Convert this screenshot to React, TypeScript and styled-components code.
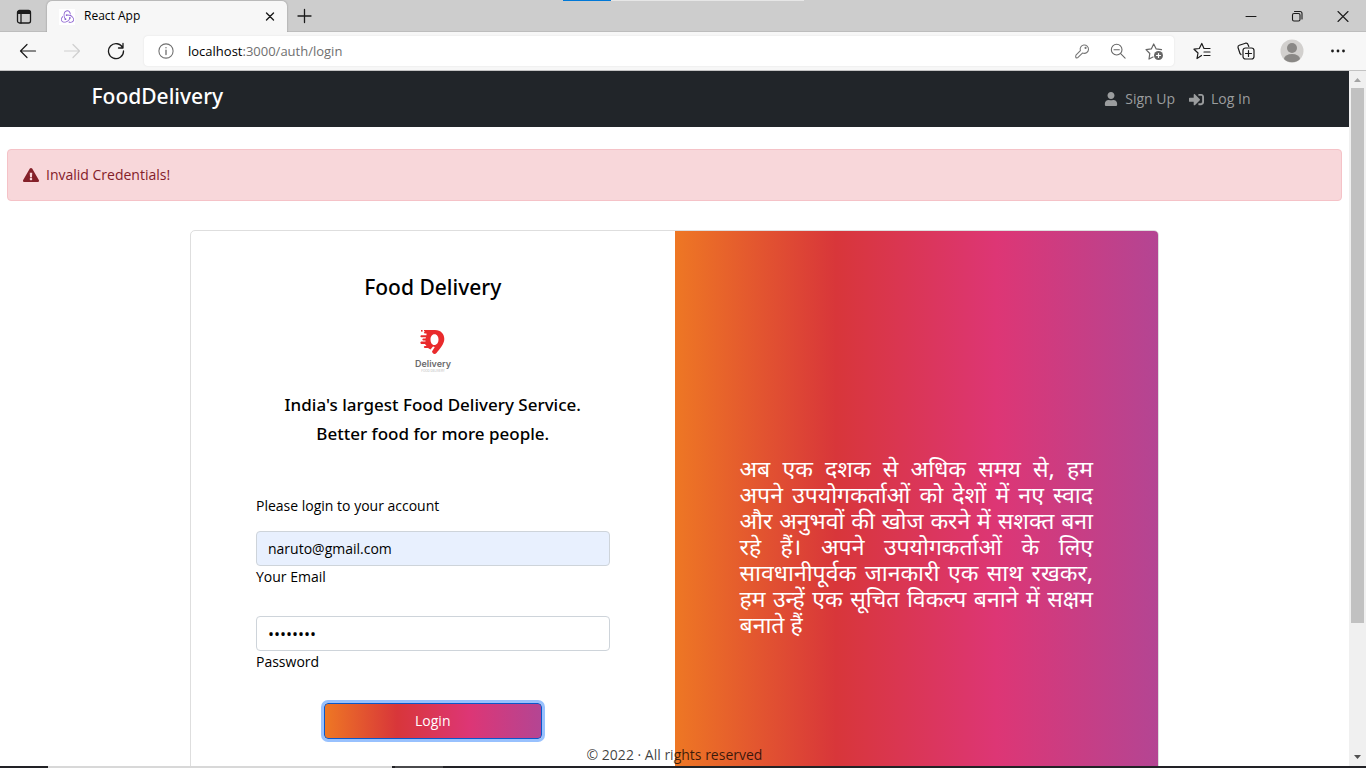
import React from "react";
import styled, { createGlobalStyle } from "styled-components";
import { FaUser, FaSignInAlt, FaExclamationTriangle } from "react-icons/fa";
import { SiRedux } from "react-icons/si";

const GRADIENT = "linear-gradient(to right, #ee7724, #d8363a, #dd3675, #b44593)";
const UI_FONT = `"Segoe UI", "Open Sans", "Noto Sans", sans-serif`;
const HEADING_FONT = `"Segoe UI", "Noto Sans", "Open Sans", sans-serif`;

const GlobalStyle = createGlobalStyle`
  *, *::before, *::after { box-sizing: border-box; }
  body { margin: 0; font-family: ${UI_FONT}; font-size: 14px; line-height: 20px; color: #000; background: #fff; }
  h1, h2, p { margin: 0; font-weight: 400; }
  button, input { font: inherit; color: inherit; }
  svg { display: block; flex: none; }
`;

const Screen = styled.div`
  display: flex;
  flex-direction: column;
  height: 100vh;
  overflow: hidden;
`;

/* Browser window */

const TopEdge = styled.div`
  display: flex;
  justify-content: center;
  height: 1px;
  background: #cdcdcd;
`;

const TopEdgePart = styled.span<{ $width: number; $color: string }>`
  width: ${(p) => p.$width}px;
  background: ${(p) => p.$color};
`;

const TabStrip = styled.div`
  display: flex;
  align-items: stretch;
  height: 31px;
  background: #cdcdcd;
  box-shadow: inset 0 -1px 0 #bdbdbd;
`;

const IconButton = styled.button<{ $width?: number }>`
  display: flex;
  align-items: center;
  justify-content: center;
  width: ${(p) => p.$width ?? 44}px;
  padding: 0;
  border: 0;
  background: transparent;
`;

const Tab = styled.div`
  display: flex;
  align-items: center;
  width: 240px;
  padding: 0 4px 0 12px;
  border-radius: 5px 5px 0 0;
  background: #f7f7f7;
  box-shadow: 0 0 2px rgba(0, 0, 0, 0.35);
  clip-path: inset(-2px -3px 0 -3px);
  font-size: 12px;
`;

const Favicon = styled.span`
  display: flex;
  align-items: center;
  justify-content: center;
  width: 16px;
  height: 16px;
  margin-right: 9px;
  background: #fff;
`;

const TabTitle = styled.span`
  flex: 1;
  padding-bottom: 2px;
`;

const WindowControls = styled.div`
  display: flex;
  margin-left: auto;
`;

const Toolbar = styled.div`
  display: flex;
  align-items: center;
  height: 39px;
  padding: 0 6px;
  background: #f7f7f7;
  border-bottom: 1px solid #c3c3c3;
`;

const AddressBar = styled.div`
  display: flex;
  flex: 1;
  align-items: center;
  height: 30px;
  margin: 0 6px;
  padding: 0 2px 0 14px;
  border-radius: 4px;
  background: #fff;
  box-shadow: 0 0 2px rgba(0, 0, 0, 0.1);
`;

const Url = styled.span`
  flex: 1;
  margin-left: 14px;
  color: #6f6f6f;
  font-size: 13px;
  b { font-weight: 400; color: #000; }
`;

const Viewport = styled.div`
  display: flex;
  flex: 1;
  min-height: 0;
`;

const Page = styled.div`
  position: relative;
  flex: 1;
  overflow: hidden;
`;

const ScrollBar = styled.div`
  display: flex;
  flex-direction: column;
  align-items: center;
  width: 17px;
  background: #f0f0f0;
`;

const ScrollTrack = styled.div`
  flex: 1;
  width: 13px;
`;

const ScrollThumb = styled.div`
  height: 81%;
  background: #c1c1c1;
`;

const TaskbarEdge = styled.div`
  display: flex;
  height: 2px;
  background: #222226;
`;

const TaskbarPart = styled.span<{ $width: number; $color: string }>`
  width: ${(p) => p.$width}px;
  background: ${(p) => p.$color};
`;

/* Site */

const Navbar = styled.header`
  height: 56px;
  background: #212529;
`;

const NavInner = styled.div`
  display: flex;
  align-items: center;
  justify-content: space-between;
  height: 100%;
  max-width: 1188px;
  margin: 0 auto;
  padding: 0 18px 0 11px;
`;

const Brand = styled.a`
  padding-bottom: 6px;
  color: #fff;
  font-family: ${HEADING_FONT};
  font-size: 21px;
  font-weight: 500;
  text-decoration: none;
`;

const NavLinks = styled.nav`
  display: flex;
  gap: 14px;
`;

const NavLink = styled.a`
  display: flex;
  align-items: center;
  gap: 7px;
  color: #9b9d9e;
  text-decoration: none;
`;

const Alert = styled.div`
  display: flex;
  align-items: center;
  gap: 7px;
  height: 52px;
  margin: 22px 7px 0;
  padding: 0 15px;
  border: 1px solid #f5c2c7;
  border-radius: 4px;
  background: #f8d7da;
  color: #842029;
`;

const Card = styled.main`
  display: grid;
  grid-template-columns: 1fr 1fr;
  width: 969px;
  max-width: 94%;
  min-height: 620px;
  margin: 29px auto 0;
  border: 1px solid #dedede;
  border-radius: 5px;
  overflow: hidden;
`;

const FormPane = styled.section`
  padding: 43px 65px;
`;

const Intro = styled.div`
  display: flex;
  flex-direction: column;
  align-items: center;
  text-align: center;
`;

const Title = styled.h1`
  font-family: ${HEADING_FONT};
  font-size: 21px;
  font-weight: 500;
  line-height: 27px;
`;

const LogoBox = styled.div`
  margin: 20px 0 9px;
`;

const Tagline = styled.h2`
  font-family: ${HEADING_FONT};
  font-size: 17px;
  font-weight: 500;
  line-height: 29px;
`;

const LoginForm = styled.form`
  display: flex;
  flex-direction: column;
  margin-top: 48px;
`;

const Hint = styled.p`
  margin-bottom: 15px;
`;

const Field = styled.div`
  display: flex;
  flex-direction: column-reverse;
  margin-bottom: 28px;
`;

const FieldInput = styled.input<{ $filled?: boolean }>`
  width: 100%;
  height: 35px;
  padding: 0 11px;
  border: 1px solid #ced4da;
  border-radius: 4px;
  background: ${(p) => (p.$filled ? "#e8f0fe" : "#fff")};
  outline: none;

  &[type="password"] {
    font-size: 16px;
  }
`;

const FieldLabel = styled.label`
  line-height: 22px;
`;

const LoginButton = styled.button`
  align-self: center;
  width: 218px;
  height: 36px;
  margin-top: 2px;
  border: 1px solid #0a58ca;
  border-radius: 4px;
  background: ${GRADIENT};
  box-shadow: 0 0 0 3px #98c1fe;
  color: #fff;
`;

const StoryPane = styled.section`
  display: flex;
  align-items: center;
  padding: 18px 65px 0;
  background: ${GRADIENT};
`;

const Story = styled.p`
  color: #fff;
  font-family: "Nirmala UI", "Noto Sans Devanagari", "Noto Sans", sans-serif;
  font-size: 23px;
  line-height: 26px;
  text-align: justify;
`;

const Footer = styled.footer`
  position: absolute;
  right: 0;
  bottom: 1px;
  left: 0;
  color: rgba(0, 0, 0, 0.75);
  text-align: center;
`;

type GlyphProps = {
  size?: number;
  color?: string;
  width?: number;
  children: React.ReactNode;
};

function Glyph({ size = 18, color = "#1b1b1b", width = 1.2, children }: GlyphProps) {
  return (
    <svg
      width={size}
      height={size}
      viewBox="0 0 18 18"
      fill="none"
      stroke={color}
      strokeWidth={width}
      strokeLinecap="round"
      strokeLinejoin="round"
      aria-hidden="true"
    >
      {children}
    </svg>
  );
}

function DeliveryLogo() {
  return (
    <svg width="60" height="60" viewBox="2 1 60 60" role="img" aria-label="Delivery">
      <path
        fill="#e92a2c"
        fillRule="evenodd"
        d="M23 10 H34 C40 10 43.300 14 43.300 19 C43.300 24 38.500 29.500 35.500 33 Q33.500 35 31.500 32.700 L31 31.500 L33.800 27 L32 26.500 L29.500 29.500 L27 28 H23.500 Q22 27 23.500 26 H25.500 L24 24 H20 Q18.500 22.700 20 21.600 H24.500 V20.500 H22 Q20.500 19.500 22 18.500 H24.500 L25 17.200 H20 Q18.500 16.200 20 15.200 H25.500 V13.500 H24 Q22 13 23.500 12 H24 V11.600 H23 Z M33.500 14.300 C30.800 14.300 29.500 17 29.500 19.500 C29.500 22.500 31 25 33.200 25 C36 25 37.500 22.500 37.500 19.500 C37.500 17 36.200 14.300 33.500 14.300 Z"
      />
      <rect x="20" y="10" width="1.600" height="1.600" fill="#e92a2c" />
      <text x="32" y="46.500" textAnchor="middle" fontFamily="Inter, sans-serif" fontSize="9" fontWeight="600" fill="#6a6a6c">
        Delivery
      </text>
      <text x="32" y="51.500" textAnchor="middle" fontFamily="Inter, sans-serif" fontSize="3" fill="#b8b8b8">
        FOOD DELIVERY
      </text>
    </svg>
  );
}

function BrowserChrome() {
  return (
    <>
      <TopEdge>
        <TopEdgePart $width={48} $color="#0078d7" />
        <TopEdgePart $width={193} $color="#e6e6e6" />
      </TopEdge>
      <TabStrip>
        <IconButton $width={47} aria-label="Tab actions">
          <Glyph width={1.3}>
            <rect x="2.500" y="2.500" width="13" height="12.500" rx="2" />
            <path d="M2.500 4.500H15.500" strokeWidth="3" strokeLinecap="butt" />
            <path d="M6 5V15" />
          </Glyph>
        </IconButton>
        <Tab>
          <Favicon>
            <SiRedux size={13} color="#8a5fd0" />
          </Favicon>
          <TabTitle>React App</TabTitle>
          <IconButton $width={26} aria-label="Close tab">
            <Glyph width={1.4}>
              <path d="M5.500 5L12.500 12M12.500 5L5.500 12" />
            </Glyph>
          </IconButton>
        </Tab>
        <IconButton $width={34} aria-label="New tab">
          <Glyph width={1.3}>
            <path d="M9.500 1.500V14.500M3 8H16" />
          </Glyph>
        </IconButton>
        <WindowControls>
          <IconButton $width={46} aria-label="Minimize">
            <Glyph width={1}>
              <path d="M4 8.500H14" />
            </Glyph>
          </IconButton>
          <IconButton $width={46} aria-label="Restore">
            <Glyph width={1.1}>
              <rect x="4.500" y="5.500" width="7.500" height="7.500" rx="1.500" />
              <path d="M6.500 3.500H12Q14 3.500 14 5.500V11" />
            </Glyph>
          </IconButton>
          <IconButton $width={46} aria-label="Close">
            <Glyph width={1.1}>
              <path d="M4 3.500L14 13.500M14 3.500L4 13.500" />
            </Glyph>
          </IconButton>
        </WindowControls>
      </TabStrip>
      <Toolbar>
        <IconButton aria-label="Back">
          <Glyph>
            <path d="M16.500 9H2M8 2.500L1.500 9L8 15.500" />
          </Glyph>
        </IconButton>
        <IconButton aria-label="Forward">
          <Glyph color="#cfcfcf">
            <path d="M1.500 9H16M10 2.500L16.500 9L10 15.500" />
          </Glyph>
        </IconButton>
        <IconButton aria-label="Refresh">
          <Glyph width={1.3}>
            <path d="M15.800 6A7.500 7.500 0 1 0 16.500 9M16 1.500V6H11.500" />
          </Glyph>
        </IconButton>
        <AddressBar>
          <Glyph size={16} color="#707070">
            <circle cx="9" cy="9" r="8" />
            <path d="M9 8V13M9 5.200V5.400" strokeWidth="1.500" />
          </Glyph>
          <Url>
            <b>localhost</b>:3000/auth/login
          </Url>
          <IconButton $width={36} aria-label="Saved passwords">
            <Glyph size={16} color="#767676">
              <path d="M7.200 8.500A4.700 4.700 0 1 1 10.500 11.500L9.500 11.300L4.500 16.300Q3.500 17 2.200 16.500Q1.500 15 2.200 13.700Z" />
              <circle cx="13" cy="5.500" r="0.600" />
            </Glyph>
          </IconButton>
          <IconButton $width={36} aria-label="Zoom">
            <Glyph size={16} color="#666">
              <circle cx="7.500" cy="7.500" r="6" />
              <path d="M12 12L17 17M4.500 7.500H10.500" />
            </Glyph>
          </IconButton>
          <IconButton $width={36} aria-label="Add to favorites">
            <Glyph color="#666">
              <path d="M8 15L4 17L4.800 11.500L1 7.700L6.300 6.900L8.700 2L11.200 6.900L16.500 7.700" />
              <circle cx="13.500" cy="13.500" r="4.500" fill="#666" stroke="none" />
              <path d="M13.500 11.500V15.500M11.500 13.500H15.500" stroke="#fff" />
            </Glyph>
          </IconButton>
        </AddressBar>
        <IconButton aria-label="Favorites">
          <Glyph>
            <path d="M8.500 13.500L4 16.500L5 11L1 7.200L6.300 6.500L8.800 1.500L11 6.500H17M11 10H17M11 13.500H17" />
          </Glyph>
        </IconButton>
        <IconButton aria-label="Collections">
          <Glyph width={1.2}>
            <path d="M4 12.500L3 11.500L1 5.500Q0.800 3.800 2.300 3.300L8.500 1.200Q10.500 0.800 11 2.500L11.800 4.500" />
            <rect x="6" y="6" width="11" height="11" rx="2.500" />
            <path d="M11.500 8.500V14.500M8.500 11.500H14.500" />
          </Glyph>
        </IconButton>
        <IconButton $width={48} aria-label="Profile">
          <svg width="24" height="24" viewBox="0 0 24 24" aria-hidden="true">
            <circle cx="12" cy="12" r="11.500" fill="#d2d0ce" />
            <circle cx="12" cy="9" r="5" fill="#8a8886" />
            <path d="M4 20A8 5 0 0 1 20 20A11.500 11.500 0 0 1 4 20Z" fill="#8a8886" />
          </svg>
        </IconButton>
        <IconButton aria-label="Settings and more">
          <Glyph>
            <g fill="#1b1b1b" stroke="none">
              <circle cx="3.500" cy="9" r="1.400" />
              <circle cx="9" cy="9" r="1.400" />
              <circle cx="14.500" cy="9" r="1.400" />
            </g>
          </Glyph>
        </IconButton>
      </Toolbar>
    </>
  );
}

function ScrollArrow({ down }: { down?: boolean }) {
  return (
    <svg width="17" height="17" viewBox="0 0 17 17" aria-hidden="true">
      <path d={down ? "M5 6H12L8.500 10Z" : "M5 11H12L8.500 7Z"} fill={down ? "#505050" : "#a3a3a3"} />
    </svg>
  );
}

export default function App() {
  return (
    <Screen>
      <GlobalStyle />
      <BrowserChrome />
      <Viewport>
        <Page>
          <Navbar>
            <NavInner>
              <Brand href="#">FoodDelivery</Brand>
              <NavLinks>
                <NavLink href="#signup">
                  <FaUser size={14} />
                  Sign Up
                </NavLink>
                <NavLink href="#login">
                  <FaSignInAlt size={15} />
                  Log In
                </NavLink>
              </NavLinks>
            </NavInner>
          </Navbar>
          <Alert role="alert">
            <FaExclamationTriangle size={16} />
            Invalid Credentials!
          </Alert>
          <Card>
            <FormPane>
              <Intro>
                <Title>Food Delivery</Title>
                <LogoBox>
                  <DeliveryLogo />
                </LogoBox>
                <Tagline>
                  India's largest Food Delivery Service.
                  <br />
                  Better food for more people.
                </Tagline>
              </Intro>
              <LoginForm onSubmit={(e) => e.preventDefault()}>
                <Hint>Please login to your account</Hint>
                <Field>
                  <FieldLabel htmlFor="email">Your Email</FieldLabel>
                  <FieldInput id="email" type="email" defaultValue="naruto@gmail.com" $filled />
                </Field>
                <Field>
                  <FieldLabel htmlFor="password">Password</FieldLabel>
                  <FieldInput id="password" type="password" defaultValue="password" />
                </Field>
                <LoginButton type="submit">Login</LoginButton>
              </LoginForm>
            </FormPane>
            <StoryPane>
              <Story lang="hi">
                अब एक दशक से अधिक समय से, हम अपने उपयोगकर्ताओं को देशों में नए स्वाद और अनुभवों की खोज करने में
                सशक्त बना रहे हैं। अपने उपयोगकर्ताओं के लिए सावधानीपूर्वक जानकारी एक साथ रखकर, हम उन्हें एक सूचित
                विकल्प बनाने में सक्षम बनाते हैं
              </Story>
            </StoryPane>
          </Card>
          <Footer>© 2022 · All rights reserved</Footer>
        </Page>
        <ScrollBar>
          <ScrollArrow />
          <ScrollTrack>
            <ScrollThumb />
          </ScrollTrack>
          <ScrollArrow down />
        </ScrollBar>
      </Viewport>
      <TaskbarEdge>
        <TaskbarPart $width={48} $color="#222226" />
        <TaskbarPart $width={344} $color="#d8d8d8" />
        <TaskbarPart $width={3} $color="#222226" />
        <TaskbarPart $width={48} $color="#4a4a4c" />
      </TaskbarEdge>
    </Screen>
  );
}
